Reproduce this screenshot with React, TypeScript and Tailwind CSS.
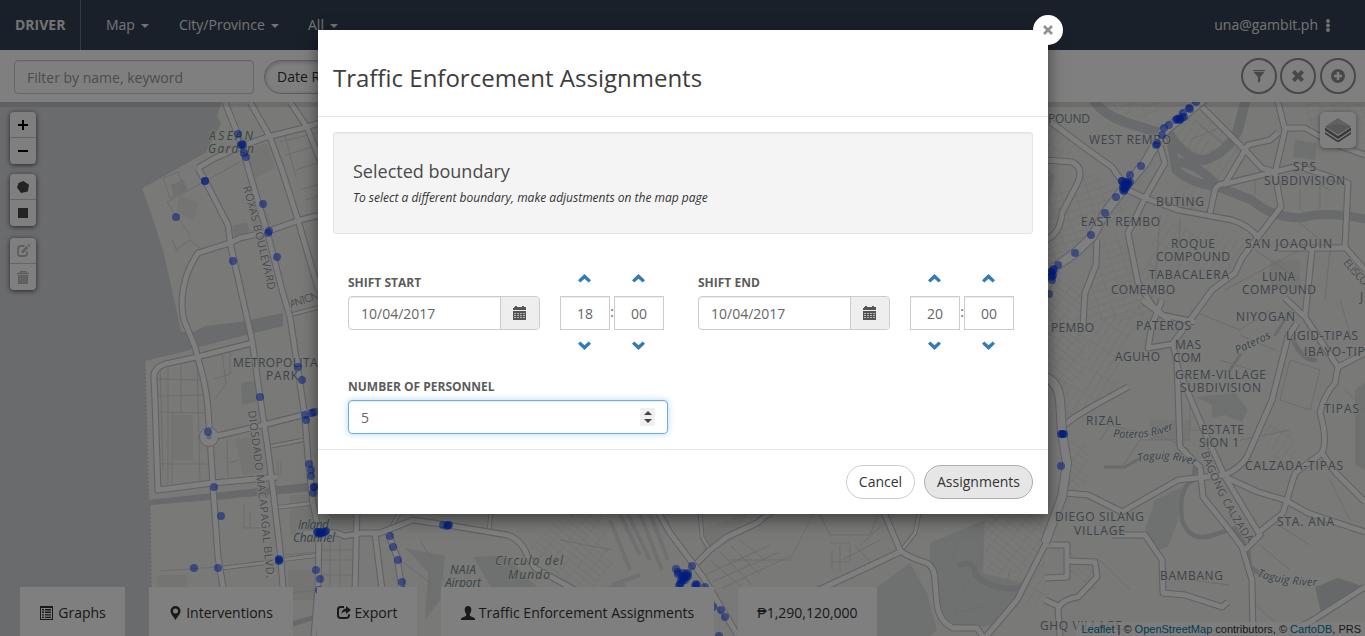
import React from "react";

type IconProps = { className?: string };

const IconList = ({ className }: IconProps) => (
  <svg viewBox="0 0 13 14" className={className} fill="currentColor">
    <path fillRule="evenodd" d="M0 0h13v14H0zM1 2v11h11V2z" />
    <path d="M2 3h2v1.4H2zM2 5.6h2V7H2zM2 8.2h2v1.4H2zM2 10.8h2V12H2zM5 3h6v1.4H5zM5 5.6h6V7H5zM5 8.2h6v1.4H5zM5 10.8h6V12H5z" />
  </svg>
);
const IconMarker = ({ className }: IconProps) => (
  <svg viewBox="0 0 10 14" className={className} fill="currentColor">
    <path fillRule="evenodd" d="M5 0a5 5 0 0 1 5 5c0 3-3.4 6-5 9C3.400 11 0 8 0 5a5 5 0 0 1 5-5zm0 2.500a2.500 2.500 0 1 0 0 5 2.500 2.500 0 0 0 0-5z" />
  </svg>
);
const IconExport = ({ className }: IconProps) => (
  <svg viewBox="0 0 14 13" className={className}>
    <path d="M7 1.100H3.500A2.500 2.500 0 0 0 1 3.600v5.800A2.500 2.500 0 0 0 3.500 12h6a2.500 2.500 0 0 0 2.500-2.500V8.300" fill="none" stroke="currentColor" strokeWidth="2" />
    <path d="M9 0l5 4-5 4V5.600C6.800 5.500 5.500 6.400 4.500 8.200 4.600 4.800 6 2.800 9 2.500z" fill="currentColor" />
  </svg>
);
const IconUser = ({ className }: IconProps) => (
  <svg viewBox="0 0 14 14" className={className} fill="currentColor">
    <path d="M7 0c2.100 0 3.300 1.500 3.300 3.600 0 1.700-.6 3.300-1.500 4.200v1.400c0 .5.300.8.900 1.100l3.200 1.400c.7.300 1.100.7 1.100 1.300v1H0v-1c0-.6.400-1 1.100-1.300l3.200-1.400c.6-.3.900-.6.900-1.100V7.800C4.300 6.900 3.700 5.300 3.700 3.600 3.700 1.500 4.900 0 7 0z" />
  </svg>
);
const IconCalendar = ({ className }: IconProps) => (
  <svg viewBox="0 0 13 14" className={className} fill="currentColor" shapeRendering="crispEdges">
    <path d="M1 1h1V0h2v1h5V0h2v1h1l1 1v2H0V2z" />
    <path d="M0 5h13v9H0z" />
    <path d="M1 7h2v1H1zM4 7h2v1H4zM7 7h2v1H7zM10 7h2v1h-2zM1 9h2v1H1zM4 9h2v1H4zM7 9h2v1H7zM10 9h2v1h-2zM1 11h2v1H1zM4 11h2v1H4zM7 11h2v1H7zM10 11h2v1h-2z" fill="#b4b4b4" />
  </svg>
);
const IconCross = ({ className }: IconProps) => (
  <svg viewBox="0 0 12 12" className={className} fill="currentColor">
    <path d="M2.800 0L6 3.200 9.200 0 12 2.800 8.800 6 12 9.200 9.200 12 6 8.800 2.800 12 0 9.200 3.200 6 0 2.800z" />
  </svg>
);
const IconClose = ({ className }: IconProps) => (
  <svg viewBox="0 0 10 10" className={className} fill="none" stroke="currentColor" strokeWidth="2.600">
    <path d="M1 1l8 8M9 1L1 9" />
  </svg>
);
const IconFilter = ({ className }: IconProps) => (
  <svg viewBox="0 0 12 13" className={className} fill="currentColor">
    <path d="M0 0h12v1H0zM.4 1.800h11.200L7.400 7v4L4.900 13V7z" />
  </svg>
);
const IconPlus = ({ className }: IconProps) => (
  <svg viewBox="0 0 14 14" className={className} fill="currentColor">
    <path fillRule="evenodd" d="M7 0a7 7 0 1 1 0 14A7 7 0 0 1 7 0zM5.700 3v2.700H3v2.600h2.700V11h2.600V8.300H11V5.700H8.300V3z" />
  </svg>
);
const IconDots = ({ className }: IconProps) => (
  <svg viewBox="0 0 4 13" className={className} fill="currentColor">
    <circle cx="2" cy="2" r="1.900" />
    <circle cx="2" cy="6.500" r="1.900" />
    <circle cx="2" cy="11" r="1.900" />
  </svg>
);
const IconChevron = ({ className }: IconProps) => (
  <svg viewBox="0 0 13 9" className={className} fill="#337ab7">
    <path d="M6.500 0L13 6.200 10.700 8.600 6.500 4.700 2.300 8.600 0 6.200z" />
  </svg>
);
const Caret = () => (
  <svg viewBox="0 0 8 4" className="mt-[2px] h-[4px] w-[8px]" fill="currentColor">
    <path d="M0 0h8L4 4z" />
  </svg>
);

const mainRoads = [
  "M225 102L240 140L256 195L268 235L282 290L290 317L298 370L305 417L308 457L313 503L319 533L318 587L314 636",
  "M198 168L210 190L228 225L231 247L243 300L252 340L260 397L267 443L273 490L280 550L283 587L288 636",
  "M320 215L300 220L263 233L240 238L230 243L198 253Q183 275 182 300Q182 318 186 325L195 347L203 377Q208 400 208 410L210 437L213 487L218 557L223 587L240 636",
  "M213 437L263 425L303 415L320 411",
  "M198 168L215 158L240 147L267 137L307 127L322 122",
  "M252 343L197 357L165 364Q153 368 154 378L155 400L158 490L213 483L277 477",
  "M300 533L337 533L345 536L362 533L380 533L413 520L447 525L507 535Q522 540 527 555L535 568L575 590",
  "M375 533L382 590", "M388 533L397 557L402 590", "M357 510L355 590",
  "M640 480L670 533L703 577L737 634",
  "M883 510L900 550Q905 556 927 563Q935 568 935 580L937 605Q940 622 953 628L977 628L985 640",
  "M900 552L823 588L790 600", "M697 563L710 550L727 537L757 523L773 510",
  "M1060 500L1045 545L1017 600L983 640",
  "M1048 120L1088 150L1112 167L1128 190L1145 198L1178 210L1232 220Q1248 225 1258 237",
  "M1160 146L1165 163L1145 198L1128 233L1132 253L1138 283L1152 305L1170 322",
  "M1202 107L1245 150L1262 168L1275 172",
  "M1210 213L1215 190Q1218 183 1225 184L1248 145L1270 140L1278 133",
  "M1278 102L1285 130L1275 173L1281 207L1258 237L1242 258L1235 273L1212 290L1188 323L1173 343L1177 363L1180 447L1200 467L1203 497L1227 527L1242 547L1252 580L1253 636",
  "M1225 184L1298 166L1348 183L1345 247L1365 270",
  "M1283 128L1305 128L1332 143L1365 155",
  "M1278 248L1345 248", "M1312 250L1305 317",
  "M1045 160L1072 162Q1084 168 1078 182L1062 213Q1060 235 1045 240",
  "M1097 240L1096 265L1085 293L1083 325",
  "M1058 430L1075 417L1095 405L1128 387",
  "M1065 493L1088 495L1122 512L1178 480L1225 475Q1240 468 1247 457L1272 400L1288 337L1297 323",
  "M1177 366L1205 433L1225 477L1260 535L1245 550",
  "M1225 477L1258 492L1285 500L1308 513L1335 522L1365 532",
  "M1258 533L1283 513L1295 473L1322 453Q1328 440 1320 413Q1324 395 1335 383L1338 367L1305 317L1285 298",
  "M1322 453L1335 472L1365 502", "M1338 367L1365 353",
  "M1112 535L1145 535L1162 560L1163 593L1185 595L1222 607L1228 602",
  "M1045 545L1067 545L1067 577L1045 578", "M1067 561L1095 562L1097 577L1078 597Q1060 600 1058 610L1060 636", "M1045 600L1058 606",
  "M1365 587L1310 622L1280 636",
  "M1173 344L1148 348L1152 325L1162 300", "M1142 300L1162 315L1195 322",
  "M250 102L270 137L283 173L297 217L320 295",
  "M290 102L307 127L322 165",
];

const wideRoads = [
  "M1205 98L1178 120L1162 133L1145 163L1125 187L1105 213L1092 237L1075 253L1055 267L1040 300",
  "M1045 377Q1058 382 1060 400L1062 433L1067 463L1062 497L1045 543",
];

const smallRoads = [
  "M223 568L263 563L280 560L320 555", "M273 508L313 503", "M290 315L320 307", "M267 447L303 440", "M400 512L388 533", "M491 510L489 532",
  "M700 510L702 537L710 550", "M900 552L915 533L920 510",
];

const lanes =
  "M167 202L240 162M167 202L190 235M163 178L178 172L185 190L170 198zM175 250L190 240L200 248M178 252L172 240M160 365L163 470M168 368V484M181 365V412M197 358L200 484M157 379L205 380M157 396L207 395M157 412L208 413M172 412V484M160 464L213 464M222 352L226 384L214 400M230 350V374L214 379M239 460L228 463M227 440L228 476M244 505V528H260M250 512V528M160 571L217 567M285 555L320 552M288 593L320 590M278 460V475H281V460M216 500L240 497M285 135L296 178M296 170L320 162M300 190L320 184M305 200L320 196M280 142L320 132M285 155L320 145M330 540V590M340 540V590M322 550H355M322 560H355M322 575H355M400 560L440 590M420 540L450 590M560 540L613 550M710 560L745 590M720 552L752 585M730 545L760 575M740 540L765 560M705 575L770 545M712 582L780 552M722 588L790 556M730 560L790 560L815 510M820 515L830 535H870L878 515M832 550V570M840 545V572M830 543H850V562H830M855 545L870 562M860 545L900 510M842 560L880 540M960 540L975 530L983 560L965 573L952 555zM967 577L955 610L965 625M1010 570L1005 590L990 605L960 612M1195 120L1230 150M1190 140L1225 125M1290 170L1330 190M1300 190V210M1320 180V210M1255 175V195M1290 215L1320 240M1255 250L1300 280M1225 290L1300 250M1330 250L1325 300M1160 215L1155 290M1180 220L1178 260M1190 310L1240 330L1270 310M1240 335L1275 350M1220 360L1268 375M1290 360L1320 370L1310 410L1280 400zM1340 300L1352 340M1345 390L1365 410M1100 440L1110 425L1170 440L1190 450M1120 470L1140 440L1190 440M1190 405V430H1205M1100 560L1130 590M1190 580L1230 585M1260 545L1290 570M1250 600L1290 636M1270 520L1310 545M1285 500L1300 470M1330 480L1350 520M1240 440L1290 430";

const dots: [number, number][] = [
  [238, 134], [243, 145], [241, 145], [242, 144], [244, 153], [246, 157], [205, 181], [205, 181], [176, 217], [263, 204], [269, 231], [268, 233], [277, 257], [233, 261],
  [298, 367], [302, 380], [260, 397], [305, 415], [306, 420], [312, 413], [314, 412], [208, 432], [309, 464], [311, 470], [311, 476], [314, 487], [313, 493], [314, 487], [214, 487], [221, 516],
  [279, 559], [279, 561], [279, 560], [194, 568], [218, 568], [318, 532], [320, 533], [323, 532], [326, 531], [319, 534], [322, 533], [317, 532], [320, 532], [325, 532], [316, 570], [320, 579], [319, 590], [390, 536], [393, 547], [398, 560], [402, 582], [403, 590],
  [443, 525], [448, 525], [447, 526], [449, 525], [676, 569], [692, 566], [678, 574], [683, 573], [684, 577], [686, 576], [681, 580], [685, 580], [688, 573], [681, 583], [679, 586], [688, 576], [684, 578], [682, 576], [686, 574], [683, 580], [687, 577], [680, 584], [678, 572], [696, 584], [695, 586], [697, 585], [705, 587], [713, 607], [721, 610], [725, 617], [719, 636],
  [1196, 102], [1189, 108], [1190, 109], [1183, 113], [1178, 119], [1180, 119], [1176, 120], [1184, 117], [1182, 117], [1180, 120], [1177, 119], [1169, 125], [1164, 128], [1162, 135], [1156, 145], [1157, 144], [1141, 166], [1130, 175], [1122, 181], [1125, 182], [1128, 182], [1125, 185], [1124, 188], [1127, 186], [1123, 190], [1126, 184], [1124, 191], [1130, 182], [1124, 184], [1126, 187], [1128, 184], [1123, 187], [1125, 189], [1122, 181], [1127, 183], [1116, 197], [1105, 213], [1091, 235], [1075, 253], [1058, 265], [1054, 269], [1052, 272], [1053, 275], [1051, 277], [1052, 280], [1051, 272], [1052, 276], [1053, 270], [1049, 294], [1061, 434], [1064, 434], [1062, 434], [1063, 434], [1061, 466],
];

type MapLabel = { t: string; x: number; y: number; w: number; k?: "park" | "water" };
const labels: MapLabel[] = [
  { t: "ASEAN", x: 209, y: 140, w: 44, k: "park" }, { t: "Garden", x: 208, y: 153, w: 46, k: "park" },
  { t: "METROPOLITAN", x: 233, y: 367, w: 94 }, { t: "PARK", x: 266, y: 380, w: 32 },
  { t: "Inland", x: 298, y: 529, w: 31, k: "water" }, { t: "Channel", x: 293, y: 542, w: 42, k: "water" },
  { t: "NAIA", x: 450, y: 574, w: 26, k: "water" }, { t: "Airport", x: 445, y: 587, w: 36, k: "water" },
  { t: "Circulo del", x: 495, y: 565, w: 68, k: "park" }, { t: "Mundo", x: 508, y: 579, w: 42, k: "park" },
  { t: "POUND", x: 1048, y: 123, w: 42 }, { t: "WEST REMBO", x: 1089, y: 144, w: 82 },
  { t: "SPS", x: 1293, y: 171, w: 23 }, { t: "SUBDIVISION", x: 1264, y: 185, w: 81 },
  { t: "BUTING", x: 1156, y: 206, w: 48 }, { t: "EAST REMBO", x: 1081, y: 226, w: 79 },
  { t: "ROQUE", x: 1171, y: 248, w: 44 }, { t: "COMPOUND", x: 1156, y: 261, w: 74 },
  { t: "SAN JOAQUIN", x: 1245, y: 248, w: 87 }, { t: "TABACALERA", x: 1149, y: 279, w: 80 },
  { t: "COMEMBO", x: 1111, y: 294, w: 64 }, { t: "LUNA", x: 1262, y: 281, w: 33 }, { t: "COMPOUND", x: 1242, y: 294, w: 74 },
  { t: "J", x: 1360, y: 301, w: 4 }, { t: "NIYOGAN", x: 1236, y: 321, w: 59 }, { t: "PEMBO", x: 1051, y: 332, w: 43 },
  { t: "PATEROS", x: 1136, y: 330, w: 55 }, { t: "LIGID-TIPAS", x: 1286, y: 340, w: 72 }, { t: "IBAYO-TIPAS", x: 1304, y: 356, w: 76 },
  { t: "MAS", x: 1175, y: 349, w: 26 }, { t: "COM", x: 1173, y: 362, w: 28 }, { t: "AGUHO", x: 1115, y: 361, w: 45 },
  { t: "GREM-VILLAGE", x: 1175, y: 379, w: 91 }, { t: "SUBDIVISION", x: 1180, y: 392, w: 81 },
  { t: "TIPAS", x: 1324, y: 413, w: 35 }, { t: "RIZAL", x: 1086, y: 425, w: 35 },
  { t: "ESTATE", x: 1201, y: 434, w: 43 }, { t: "SION 1", x: 1199, y: 447, w: 40 },
  { t: "CALZADA-TIPAS", x: 1245, y: 470, w: 98 }, { t: "DIEGO SILANG", x: 1055, y: 521, w: 89 }, { t: "VILLAGE", x: 1074, y: 535, w: 51 },
  { t: "STA. ANA", x: 1277, y: 526, w: 57 }, { t: "BAMBANG", x: 1160, y: 580, w: 63 }, { t: "GHQ VILLAGE", x: 1040, y: 630, w: 82 },
];

const curves = [
  { id: "c1", d: "M243 187Q260 250 269 295", t: "ROXAS BOULEVARD", w: 106, water: false },
  { id: "c2", d: "M248 411Q260 500 267 582", t: "DIOSDADO MACAPAGAL BLVD.", w: 168, water: false },
  { id: "c3", d: "M1201 453Q1220 505 1250 546", t: "BAGONG CALZADA", w: 102, water: false },
  { id: "c4", d: "M291 308L330 295", t: "ANTONIO", w: 38, water: false },
  { id: "c5", d: "M1343 263Q1352 275 1368 290", t: "ELISCO", w: 32, water: false },
  { id: "c6", d: "M1113 437Q1148 441 1176 428", t: "Pateros River", w: 62, water: true },
  { id: "c7", d: "M1138 462Q1168 455 1196 466", t: "Taguig River", w: 58, water: true },
  { id: "c8", d: "M1237 354L1273 337", t: "Pateros", w: 38, water: true },
  { id: "c9", d: "M1257 576Q1280 585 1318 586", t: "Taguig River", w: 61, water: true },
];

const Roads = ({ paths, outer, inner }: { paths: string[]; outer: number; inner: number }) => (
  <g fill="none" strokeLinejoin="round">
    {paths.map((d) => <path key={d} d={d} stroke="#c3c4c4" strokeWidth={outer} />)}
    {paths.map((d) => <path key={d} d={d} stroke="#fff" strokeWidth={inner} />)}
  </g>
);

const CityMap = () => (
  <svg viewBox="0 102 1365 534" className="block h-[534px] w-[1365px]" fontFamily="'Open Sans', sans-serif">
    <defs>
      <pattern id="ha" width="13" height="7" patternUnits="userSpaceOnUse" patternTransform="rotate(-18)">
        <path d="M0 0H13M0 0V7" stroke="#dfe0e0" fill="none" />
      </pattern>
      <pattern id="hb" width="12" height="6" patternUnits="userSpaceOnUse" patternTransform="rotate(38)">
        <path d="M0 0H12M0 0V6" stroke="#dfe0e0" fill="none" />
      </pattern>
      <pattern id="hc" width="24" height="7" patternUnits="userSpaceOnUse" patternTransform="rotate(-58)">
        <path d="M0 0H24M0 0V7" stroke="#dfe0e0" fill="none" />
      </pattern>
      {curves.map((c) => <path key={c.id} id={c.id} d={c.d} />)}
    </defs>
    <rect y="102" width="1365" height="534" fill="#d5d6da" />
    <path d="M222 102L217 116L221 123L206 152L160 178L142 188L150 210L163 250L172 290L181 331L190 334L205 326L240 322L283 313L283 326L230 339L195 348L190 350L145 361L148 490L149 500L318 482V491L150 505L152 636H1365V102z" fill="#f3f2ef" />
    <path d="M145 361L149 500M150 505L152 636M142 188L206 152" stroke="#d9c4c4" strokeDasharray="2 2" fill="none" />
    <g fill="#e9e8e4">
      <path d="M173 415h20v45h-20zM180 195l18 8-4 18-18-10zM245 150l22-7 8 25-20 10zM248 205l15-4 8 22-18 6zM235 440l22-4 6 36-20 3zM290 495h24v40h-24zM330 480h30v50h-30zM700 530l50-18-20 30-25 12zM1150 420h40v20h-40zM1270 260h30v30h-30zM157 575h30v12h-30zM288 570h26v30h-26z" />
    </g>
    <g fill="#dfe2e0">
      <path d="M241 383l14-2 4 20-17 4zM232 226l15-4 3 12-15 4zM170 185l14-5 4 10-14 6zM473 557L505 555L540 590H493zM405 548L445 556L440 600L425 620L428 572z" />
      <path d="M1155 500L1182 487L1178 520L1168 547L1155 551L1145 530zM1195 397L1235 393L1248 410L1242 422L1225 415L1212 418V405zM1295 140L1317 143L1315 160L1293 157zM1355 390L1365 382V470L1355 465zM1045 168L1055 175L1048 205z" />
      <path d="M930 543L985 520L983 573L1023 583L1003 622L977 628L953 626L938 610L937 575L930 562zM877 587L910 563L927 593L937 630L930 636H877z" />
      <path d="M620 514L640 555M628 514L650 560M610 520L630 570M640 514L662 570M650 514L668 560M612 585L640 575M600 590L625 584" stroke="#dfe2e0" strokeWidth="4" />
    </g>
    <path d="M1102 102H1170L1150 122L1120 112zM1165 150L1120 215L1075 262L1048 275V200L1090 170L1125 195zM1090 240L1128 233L1140 285L1160 320L1085 320zM1300 102H1365V140L1310 125z" fill="url(#ha)" />
    <path d="M530 547L568 510H600L613 565L590 590H565zM985 514H1060L1040 560L1010 576L985 570zM1066 440L1090 445L1085 485L1068 490zM1048 270L1085 290V380L1062 385L1048 370zM1060 550L1095 562V590L1065 570z" fill="url(#hb)" />
    <path d="M1090 320L1140 310L1110 400L1062 425V380L1085 390zM1045 120L1085 150L1045 158zM1185 180L1215 185L1210 212L1165 205zM1200 110L1245 150L1225 182L1180 165V120zM1160 220L1250 240L1230 272L1140 280zM1260 430L1280 420L1300 450L1285 480zM1010 580L1045 550V600L1010 610z" fill="url(#hc)" />
    <g fill="none" stroke="#d1d4d6" strokeLinecap="round" strokeLinejoin="round">
      <path d="M1095 102Q1105 115 1125 122L1150 130L1170 135Q1185 160 1205 160Q1228 152 1238 130L1245 102" strokeWidth="10" />
      <path d="M1170 135L1176 170Q1190 183 1218 187L1252 200Q1270 217 1300 218Q1325 210 1370 220M1178 162Q1200 165 1218 187" strokeWidth="9" />
      <path d="M1195 467L1193 480Q1178 488 1182 520Q1190 542 1210 536L1235 528L1248 550L1250 567L1270 580M1293 340Q1302 360 1315 360" strokeWidth="4.500" />
      <path d="M1105 467H1125L1142 457M1230 370L1240 355M1275 335L1290 312" strokeWidth="3" />
      <path d="M960 565Q975 560 975 575Q995 592 1020 588" strokeWidth="6" />
    </g>
    <path d="M1315 587L1338 578L1365 587L1322 617z" fill="#cfd1d4" />
    <path d="M149 500L318 482V490L150 505zM290 622L316 614V619L292 627z" fill="#d0d3d5" />
    <path d={lanes} fill="none" stroke="#d8d9da" strokeWidth="1" />
    <Roads paths={smallRoads} outer={4.5} inner={2.8} />
    <Roads paths={mainRoads} outer={7} inner={4.8} />
    <Roads paths={wideRoads} outer={10} inner={8} />
    <circle cx="209" cy="437" r="9.500" fill="#fff" stroke="#c3c4c4" />
    <path d="M209 437L222 434.500" stroke="#fff" strokeWidth="4.800" />
    <circle cx="209" cy="437" r="2.500" fill="#d0d0d0" />
    <g fontSize="12">
      {labels.map((l) => (
        <text
          key={l.t + l.x + l.y}
          x={l.x}
          y={l.y}
          textLength={l.w}
          fontStyle={l.k ? "italic" : "normal"}
          fill={l.k === "park" ? "#72907e" : l.k === "water" ? "#718893" : "#7c8996"}
          stroke="#f3f2ef"
          strokeWidth="2"
          strokeOpacity=".7"
          paintOrder="stroke"
        >
          {l.t}
        </text>
      ))}
      {curves.map((c) => (
        <text key={c.id} fontSize="11" fontStyle={c.water ? "italic" : "normal"} fill={c.water ? "#718893" : "#94989c"} stroke="#f8f8f6" strokeWidth="2" paintOrder="stroke">
          <textPath href={"#" + c.id} textLength={c.w}>{c.t}</textPath>
        </text>
      ))}
    </g>
    <g fill="#0038ff" fillOpacity=".52">
      {dots.map(([x, y], i) => <circle key={i} cx={x} cy={y} r="4" />)}
    </g>
  </svg>
);

const MapButtons = ({ children }: { children: React.ReactNode }) => (
  <div className="flex w-[26px] flex-col divide-y divide-[#ccc] overflow-hidden rounded bg-white shadow-[0_1px_5px_rgba(0,0,0,0.65)]">{children}</div>
);
const MapButton = ({ children }: { children: React.ReactNode }) => (
  <button className="flex h-[26px] w-[26px] items-center justify-center">{children}</button>
);

const NavItem = ({ children, className }: { children: React.ReactNode; className: string }) => (
  <div className={"flex items-center gap-[6px] " + className}>
    {children}
    <Caret />
  </div>
);

const RoundButton = ({ children }: { children: React.ReactNode }) => (
  <button className="flex h-9 w-9 items-center justify-center rounded-full border-2 border-[#919191] text-[#919191]">{children}</button>
);

const Tab = ({ children, className }: { children: React.ReactNode; className: string }) => (
  <div className={"flex h-[49px] items-center justify-center bg-white pt-[2px] text-[#333] " + className}>{children}</div>
);

const TimeField = ({ value }: { value: string }) => (
  <div className="flex w-[50px] flex-col">
    <IconChevron className="ml-[18px] h-[9px] w-[13px]" />
    <div className="mt-[13px] flex h-[34px] w-[50px] items-center justify-center border border-[#ccc] pt-px text-[#666] shadow-[inset_0_1px_1px_rgba(0,0,0,0.075)]">{value}</div>
    <IconChevron className="ml-[18px] mt-[11px] h-[9px] w-[13px] rotate-180" />
  </div>
);

const Shift = ({ label, hour }: { label: string; hour: string }) => (
  <div className="flex w-[350px] shrink-0">
    <div className="w-[192px]">
      <div className="flex h-[18px] items-center text-[12px] font-bold text-[#5c5c5c]">{label}</div>
      <div className="mt-[4px] flex h-[34px] overflow-hidden rounded border border-[#ccc] text-[#666] shadow-[inset_0_1px_1px_rgba(0,0,0,0.075)]">
        <div className="flex flex-1 items-center pl-3 pt-px">10/04/2017</div>
        <div className="flex w-[39px] items-center border-l border-[#ccc] bg-[#eee] pl-[12px] text-[#555]">
          <IconCalendar className="h-[14px] w-[13px]" />
        </div>
      </div>
    </div>
    <div className="ml-5 flex">
      <TimeField value={hour} />
      <div className="flex w-1 items-center justify-center text-[#666]">:</div>
      <TimeField value="00" />
    </div>
  </div>
);

export default function App() {
  return (
    <div className="relative h-[636px] w-[1365px] overflow-hidden whitespace-nowrap bg-white font-['Open_Sans',sans-serif] text-[14px] leading-5 text-[#333]">
      <header className="flex h-[50px] items-center bg-[#344054] text-[#e6e6e6]">
        <div className="flex h-full w-[81px] items-center border-r border-[#6b7485] pl-[15px] font-bold">DRIVER</div>
        <NavItem className="ml-[25px] w-[73px]">Map</NavItem>
        <NavItem className="w-[129px]">City/Province</NavItem>
        <NavItem className="w-[60px]">All</NavItem>
        <div className="ml-auto mr-[35px] flex items-center gap-[8px]">
          una@gambit.ph
          <IconDots className="h-[13px] w-[4px]" />
        </div>
      </header>

      <div className="flex h-[52px] items-center bg-white pl-[14px] pr-[9px]">
        <div className="mt-[2px] flex h-[34px] w-[240px] items-center rounded border border-[#ccc] pl-3 pt-[2px] text-[#999] shadow-[inset_0_1px_1px_rgba(0,0,0,0.075)]">Filter by name, keyword</div>
        <div className="ml-[10px] mt-[2px] flex h-[34px] w-[120px] items-center rounded-full border border-[#bbb] pl-3 shadow-[inset_0_1px_4px_rgba(0,0,0,0.25)]">Date Range</div>
        <div className="ml-auto flex gap-[3px]">
          <RoundButton><IconFilter className="h-[13px] w-[12px]" /></RoundButton>
          <RoundButton><IconCross className="h-[12px] w-[12px]" /></RoundButton>
          <div className="pl-px"><RoundButton><IconPlus className="h-[14px] w-[14px]" /></RoundButton></div>
        </div>
      </div>

      <main className="relative h-[534px]">
        <CityMap />
        <div className="absolute inset-x-0 top-0 h-[5px] bg-black/10" />
        <div className="absolute left-[10px] top-[10px] flex flex-col">
          <MapButtons>
            <MapButton><svg viewBox="0 0 10 10" className="h-[10px] w-[10px]"><path d="M4 0h2v4h4v2H6v4H4V6H0V4h4z" /></svg></MapButton>
            <MapButton><svg viewBox="0 0 10 2" className="h-[2px] w-[10px]"><path d="M0 0h10v2H0z" /></svg></MapButton>
          </MapButtons>
          <div className="mt-[10px]">
            <MapButtons>
              <MapButton><svg viewBox="0 0 12 12" className="h-[12px] w-[12px]" fill="#464646"><path d="M6.500 0L12 3.800 10.800 10.500 4 12 0 6.500 1.500 2z" /></svg></MapButton>
              <MapButton><svg viewBox="0 0 10 10" className="h-[10px] w-[10px]" fill="#464646"><path d="M0 0h10v10H0z" /></svg></MapButton>
            </MapButtons>
          </div>
          <div className="mt-[12px]">
            <MapButtons>
              <MapButton>
                <svg viewBox="0 0 13 13" className="h-[13px] w-[13px]" fill="none" stroke="#bbb" strokeWidth="1.800">
                  <path d="M7.500 2H3.500Q1 2 1 4.500V9.500Q1 12 3.500 12H7.500Q10 12 10 9.500V7.500" />
                  <path d="M5 8.500L10.500 3M11.500 2L12.700 .8" strokeWidth="2.600" />
                </svg>
              </MapButton>
              <MapButton>
                <svg viewBox="0 0 12 13" className="h-[13px] w-[12px]" fill="none" stroke="#bbb">
                  <path d="M0 2.500H12M3.500 2V.7H8.500V2" strokeWidth="1.300" />
                  <path d="M1 4h10v9H1z" fill="#c4c4c4" stroke="none" />
                  <path d="M1.500 4V12.500H10.500V4" />
                </svg>
              </MapButton>
            </MapButtons>
          </div>
        </div>
        <div className="absolute right-[9px] top-[10px] flex h-9 w-9 items-center justify-center rounded-[5px] bg-white shadow-[0_1px_5px_rgba(0,0,0,0.4)]">
          <svg viewBox="0 0 26 26" className="h-[26px] w-[26px]">
            <path d="M0 17L13 25.500 26 17V15L13 23.500 0 15z" fill="#747474" />
            <path d="M0 13.500L13 22 26 13.500V10.500L13 19 0 10.500z" fill="#747474" />
            <path d="M13 1L26 9.500 13 17.500 0 9.500z" fill="#c2c2c2" />
            <path d="M13 7L26 9.500 13 17.500 0 9.500z" fill="#b2b2b2" />
          </svg>
        </div>
        <div className="absolute bottom-0 left-5 flex gap-6">
          <Tab className="w-[105px] gap-[5px] pl-px"><IconList className="h-[14px] w-[13px]" />Graphs</Tab>
          <Tab className="w-[144px] gap-[5px] pl-px"><IconMarker className="h-[14px] w-[11px]" />Interventions</Tab>
          <Tab className="w-[100px] gap-[4px]"><IconExport className="h-[13px] w-[14px]" />Export</Tab>
          <Tab className="w-[273px] gap-1"><IconUser className="h-[14px] w-[14px]" />Traffic Enforcement Assignments</Tab>
          <Tab className="w-[139px]">₱1,290,120,000</Tab>
        </div>
        <div className="absolute bottom-0 right-0 bg-white/70 pl-[5px] pr-[4px] font-['Liberation_Sans',sans-serif] text-[11px] leading-[14px]">
          <span className="text-[#0078a8]">Leaflet</span> | © <span className="text-[#0078a8]">OpenStreetMap</span> contributors, © <span className="text-[#0078a8]">CartoDB</span>, PRS
        </div>
      </main>

      <div className="absolute inset-0 bg-black/50">
        <section className="relative ml-[318px] mt-[30px] flex h-[484px] w-[730px] flex-col bg-white shadow-[0_5px_15px_rgba(0,0,0,0.5)]">
          <button className="absolute -right-[15px] -top-[15px] flex h-[30px] w-[30px] items-center justify-center rounded-full bg-white pb-px text-[#909090]">
            <IconClose className="h-[10px] w-[10px]" />
          </button>
          <div className="flex h-[87px] items-center border-b border-[#e5e5e5] pl-[15px] pt-[9px] text-[24px] leading-[34px] text-[#3d3d3d]">Traffic Enforcement Assignments</div>
          <div className="flex-1 px-[15px] pt-[15px]">
            <div className="h-[102px] rounded-[3px] border border-[#e3e3e3] bg-[#f4f4f4] px-[19px] pt-[26px] shadow-[inset_0_1px_1px_rgba(0,0,0,0.05)]">
              <div className="text-[18px] leading-6 text-[#4a4a4a]">Selected boundary</div>
              <div className="mt-[6px] text-[12px] italic leading-[18px]">To select a different boundary, make adjustments on the map page</div>
            </div>
            <div className="mt-[40px] flex pl-[15px]">
              <Shift label="SHIFT START" hour="18" />
              <Shift label="SHIFT END" hour="20" />
            </div>
            <div className="ml-[15px] mt-[27px] w-[320px]">
              <div className="flex h-[20px] items-center text-[12px] font-bold text-[#5c5c5c]">NUMBER OF PERSONNEL</div>
              <div className="mt-[3px] flex h-[34px] items-center justify-between rounded border border-[#66afe9] pl-3 pr-3 text-[#666] shadow-[inset_0_1px_1px_rgba(0,0,0,0.075),0_0_6px_rgba(102,175,233,0.5)]">
                <span className="pt-px">5</span>
                <span className="flex h-[18px] w-[15px] flex-col items-center justify-center gap-1 bg-[#efefef]">
                  <svg viewBox="0 0 8 4" className="h-[4px] w-[8px]" fill="#444"><path d="M0 4h8L4 0z" /></svg>
                  <svg viewBox="0 0 8 4" className="h-[4px] w-[8px]" fill="#444"><path d="M0 0h8L4 4z" /></svg>
                </span>
              </div>
            </div>
          </div>
          <div className="flex h-[65px] items-center justify-end gap-[9px] border-t border-[#e5e5e5] pr-[15px]">
            <button className="h-[34px] w-[69px] rounded-full border border-[#ccc] bg-white">Cancel</button>
            <button className="h-[34px] w-[109px] rounded-full border border-[#adadad] bg-[#e6e6e6]">Assignments</button>
          </div>
        </section>
      </div>
    </div>
  );
}
